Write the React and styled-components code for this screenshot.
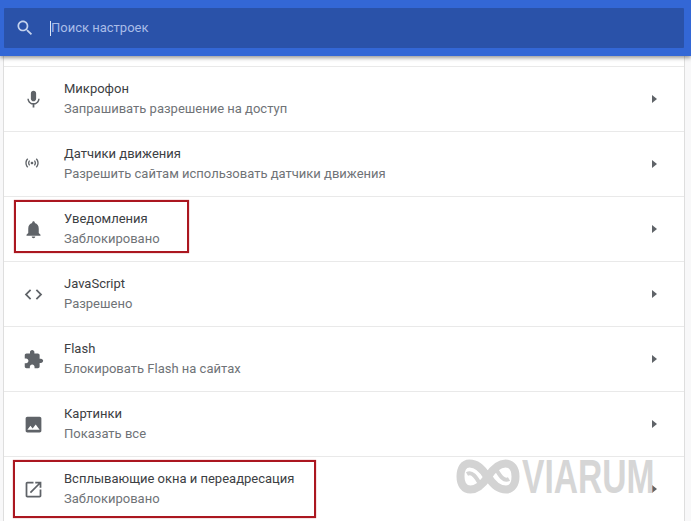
import React from "react";
import styled, { createGlobalStyle } from "styled-components";

const Global = createGlobalStyle`
  html, body { margin: 0; padding: 0; background: #f7f7f7; }
  body { font-family: Roboto, "Noto Sans", sans-serif; }
`;

const Page = styled.div`
  width: 691px;
  height: 521px;
  overflow: hidden;
  position: relative;
  background: #f8f8f9;
`;

const Header = styled.header`
  height: 56px;
  box-sizing: border-box;
  padding: 8px 7px 8px 4px;
  background: #3367d6;
  box-shadow: 0 2px 4px rgba(0, 0, 0, 0.4);
  position: relative;
  z-index: 2;
`;

const SearchBox = styled.div`
  height: 40px;
  display: flex;
  align-items: center;
  background: #2a52a9;
  padding-left: 11px;
  border-radius: 1px;
`;

const SearchIcon = styled.svg`
  width: 20px;
  height: 20px;
  fill: #c5d3ee;
  flex: none;
`;

const Caret = styled.span`
  width: 1px;
  height: 15px;
  margin-left: 15px;
  background: #dfe7f7;
  flex: none;
`;

const SearchText = styled.span`
  font-size: 13px;
  color: #a9bde8;
  font-weight: 400;
  margin-bottom: 1px;
`;

const Card = styled.main`
  margin: 0 6px 0 3px;
  padding-top: 10px;
  background: #fff;
  border-left: 1px solid #dedede;
  border-right: 1px solid #dedede;
`;

const Row = styled.div`
  height: 65px;
  box-sizing: border-box;
  display: flex;
  align-items: center;
  padding-left: 17px;
  padding-right: 27px;
  border-top: 1px solid #e9e9e9;
`;

const IconSlot = styled.span`
  width: 24px;
  height: 24px;
  flex: none;
  margin-right: 19px;
  color: #5f6368;
  display: flex;
  align-items: center;
  justify-content: center;
  position: relative;
  top: ${(p) => p.$dy || 0}px;
  left: ${(p) => p.$dx || 0}px;
  svg { width: ${(p) => p.$size || 21}px; height: ${(p) => p.$size || 21}px; fill: currentColor; }
`;

const Texts = styled.div`
  flex: 1;
  display: flex;
  flex-direction: column;
  gap: 4px;
  font-size: 13px;
  line-height: 16px;
`;

const Title = styled.div`
  color: #3c4043;
`;

const Sub = styled.div`
  color: #6f7377;
`;

const Arrow = styled.span`
  width: 0;
  height: 0;
  border-left: 5px solid #5f6368;
  border-top: 4px solid transparent;
  border-bottom: 4px solid transparent;
  flex: none;
`;

const Mark = styled.div`
  position: absolute;
  box-sizing: border-box;
  border: 2px solid #ab1720;
  box-shadow: 0 0 1px rgba(171, 23, 32, 0.7);
  left: ${(p) => p.$x}px;
  top: ${(p) => p.$y}px;
  width: ${(p) => p.$w}px;
  height: ${(p) => p.$h}px;
  z-index: 3;
  pointer-events: none;
`;

const Watermark = styled.div`
  position: absolute;
  left: 456px;
  top: 459px;
  height: 35px;
  display: flex;
  align-items: center;
  z-index: 1;
`;

const WatermarkLogo = styled.svg`
  width: 64px;
  height: 35px;
  flex: none;
  fill: none;
  stroke: #d3d3d3;
`;

const WatermarkText = styled.span`
  font-family: "Liberation Sans", sans-serif;
  font-weight: 700;
  font-size: 48px;
  line-height: 35px;
  color: #d6d6d6;
  margin-left: 2px;
  transform: scaleX(0.7);
  transform-origin: left center;
`;

const rows = [
  {
    title: "Микрофон",
    sub: "Запрашивать разрешение на доступ",
    icon: <path d="M12 14c1.66 0 3-1.34 3-3V5c0-1.66-1.34-3-3-3S9 3.34 9 5v6c0 1.66 1.34 3 3 3zm5.3-3c0 3-2.54 5.1-5.3 5.1S6.7 14 6.7 11H5c0 3.41 2.72 6.23 6 6.72V21h2v-3.28c3.28-.48 6-3.3 6-6.72h-1.7z" />,
  },
  {
    title: "Датчики движения",
    sub: "Разрешить сайтам использовать датчики движения",
    size: 16,
    dx: -1,
    dy: -1,
    icon: <path d="M7.76 16.24C6.67 15.16 6 13.66 6 12s.67-3.16 1.76-4.24l1.42 1.42C8.45 9.9 8 10.9 8 12c0 1.1.45 2.1 1.17 2.83l-1.41 1.41zm8.48 0C17.33 15.16 18 13.66 18 12s-.67-3.16-1.76-4.24l-1.42 1.42C15.55 9.9 16 10.9 16 12c0 1.1-.45 2.1-1.17 2.83l1.41 1.41zM12 10c-1.1 0-2 .9-2 2s.9 2 2 2 2-.9 2-2-.9-2-2-2zm8 2c0 2.21-.9 4.21-2.35 5.65l1.42 1.42C20.88 17.26 22 14.76 22 12s-1.12-5.26-2.93-7.07l-1.42 1.42C19.1 7.79 20 9.79 20 12zM6.35 6.35L4.93 4.93C3.12 6.74 2 9.24 2 12s1.12 5.26 2.93 7.07l1.42-1.42C4.9 16.21 4 14.21 4 12s.9-4.21 2.35-5.65z" />,
  },
  {
    title: "Уведомления",
    sub: "Заблокировано",
    icon: <path d="M12 22c1.1 0 2-.9 2-2h-4c0 1.1.89 2 2 2zm6-6v-5c0-3.07-1.64-5.64-4.5-6.32V4c0-.83-.67-1.5-1.5-1.5s-1.5.67-1.5 1.5v.68C7.63 5.36 6 7.92 6 11v5l-2 2v1h16v-1l-2-2z" />,
  },
  {
    title: "JavaScript",
    sub: "Разрешено",
    icon: <path d="M9.4 16.6L4.8 12l4.6-4.6L8 6l-6 6 6 6 1.4-1.4zm5.2 0l4.6-4.6-4.6-4.6L16 6l6 6-6 6-1.4-1.4z" />,
  },
  {
    title: "Flash",
    sub: "Блокировать Flash на сайтах",
    icon: <path d="M20.5 11H19V7c0-1.1-.9-2-2-2h-4V3.5C13 2.12 11.88 1 10.5 1S8 2.12 8 3.5V5H4c-1.1 0-1.99.9-1.99 2v3.8H3.5c1.49 0 2.7 1.21 2.7 2.7s-1.21 2.7-2.7 2.7H2V20c0 1.1.9 2 2 2h3.8v-1.5c0-1.49 1.21-2.7 2.7-2.7 1.49 0 2.7 1.21 2.7 2.7V22H17c1.1 0 2-.9 2-2v-4h1.5c1.38 0 2.5-1.12 2.5-2.5S21.88 11 20.5 11z" />,
  },
  {
    title: "Картинки",
    sub: "Показать все",
    icon: <path d="M21 19V5c0-1.1-.9-2-2-2H5c-1.1 0-2 .9-2 2v14c0 1.1.9 2 2 2h14c1.1 0 2-.9 2-2zM8.5 13.5l2.5 3.01L14.5 12l4.5 6H5l3.5-4.5z" />,
  },
  {
    title: "Всплывающие окна и переадресация",
    sub: "Заблокировано",
    icon: <path d="M19 19H5V5h7V3H5c-1.11 0-2 .9-2 2v14c0 1.1.89 2 2 2h14c1.1 0 2-.9 2-2v-7h-2v7zM14 3v2h3.59l-9.83 9.83 1.41 1.41L19 6.41V10h2V3h-7z" />,
  },
];

export default function App() {
  return (
    <Page>
      <Global />
      <Header>
        <SearchBox>
          <SearchIcon viewBox="0 0 24 24">
            <path d="M15.5 14h-.79l-.28-.27C15.41 12.59 16 11.11 16 9.5 16 5.91 13.09 3 9.5 3S3 5.91 3 9.5 5.91 16 9.5 16c1.61 0 3.09-.59 4.23-1.57l.27.28v.79l5 4.99L20.49 19l-4.99-5zm-6 0C7.01 14 5 11.99 5 9.5S7.01 5 9.5 5 14 7.01 14 9.5 11.99 14 9.5 14z" />
          </SearchIcon>
          <Caret />
          <SearchText>Поиск настроек</SearchText>
        </SearchBox>
      </Header>
      <Card>
        {rows.map((r) => (
          <Row key={r.title}>
            <IconSlot $size={r.size} $dx={r.dx} $dy={r.dy}>
              <svg viewBox="0 0 24 24">{r.icon}</svg>
            </IconSlot>
            <Texts>
              <Title>{r.title}</Title>
              <Sub>{r.sub}</Sub>
            </Texts>
            <Arrow />
          </Row>
        ))}
      </Card>
      <Mark $x={14} $y={200} $w={175} $h={53} />
      <Mark $x={13} $y={460} $w={303} $h={58} />
      <Watermark>
        <WatermarkLogo viewBox="0 0 64 35">
          <path
            d="M31 17.5 C26 9 21 4.5 13.5 4.5 C7.5 4.5 4.5 10 4.5 17.5 C4.5 25 8 30.5 14.5 30.5 C22 30.5 27 25 32 17.5 C37 10 42 4.5 49.5 4.5 C56 4.5 59.5 10 59.5 17.5 C59.5 25 56 30.5 50 30.5 C43 30.5 37 26 32 17.5"
            strokeWidth="8"
          />
          <path d="M11 15 C16 12 20 18 24 25" strokeWidth="4" />
          <path d="M53 20 C48 23 44 17 40 10" strokeWidth="4" />
        </WatermarkLogo>
        <WatermarkText>VIARUM</WatermarkText>
      </Watermark>
    </Page>
  );
}
